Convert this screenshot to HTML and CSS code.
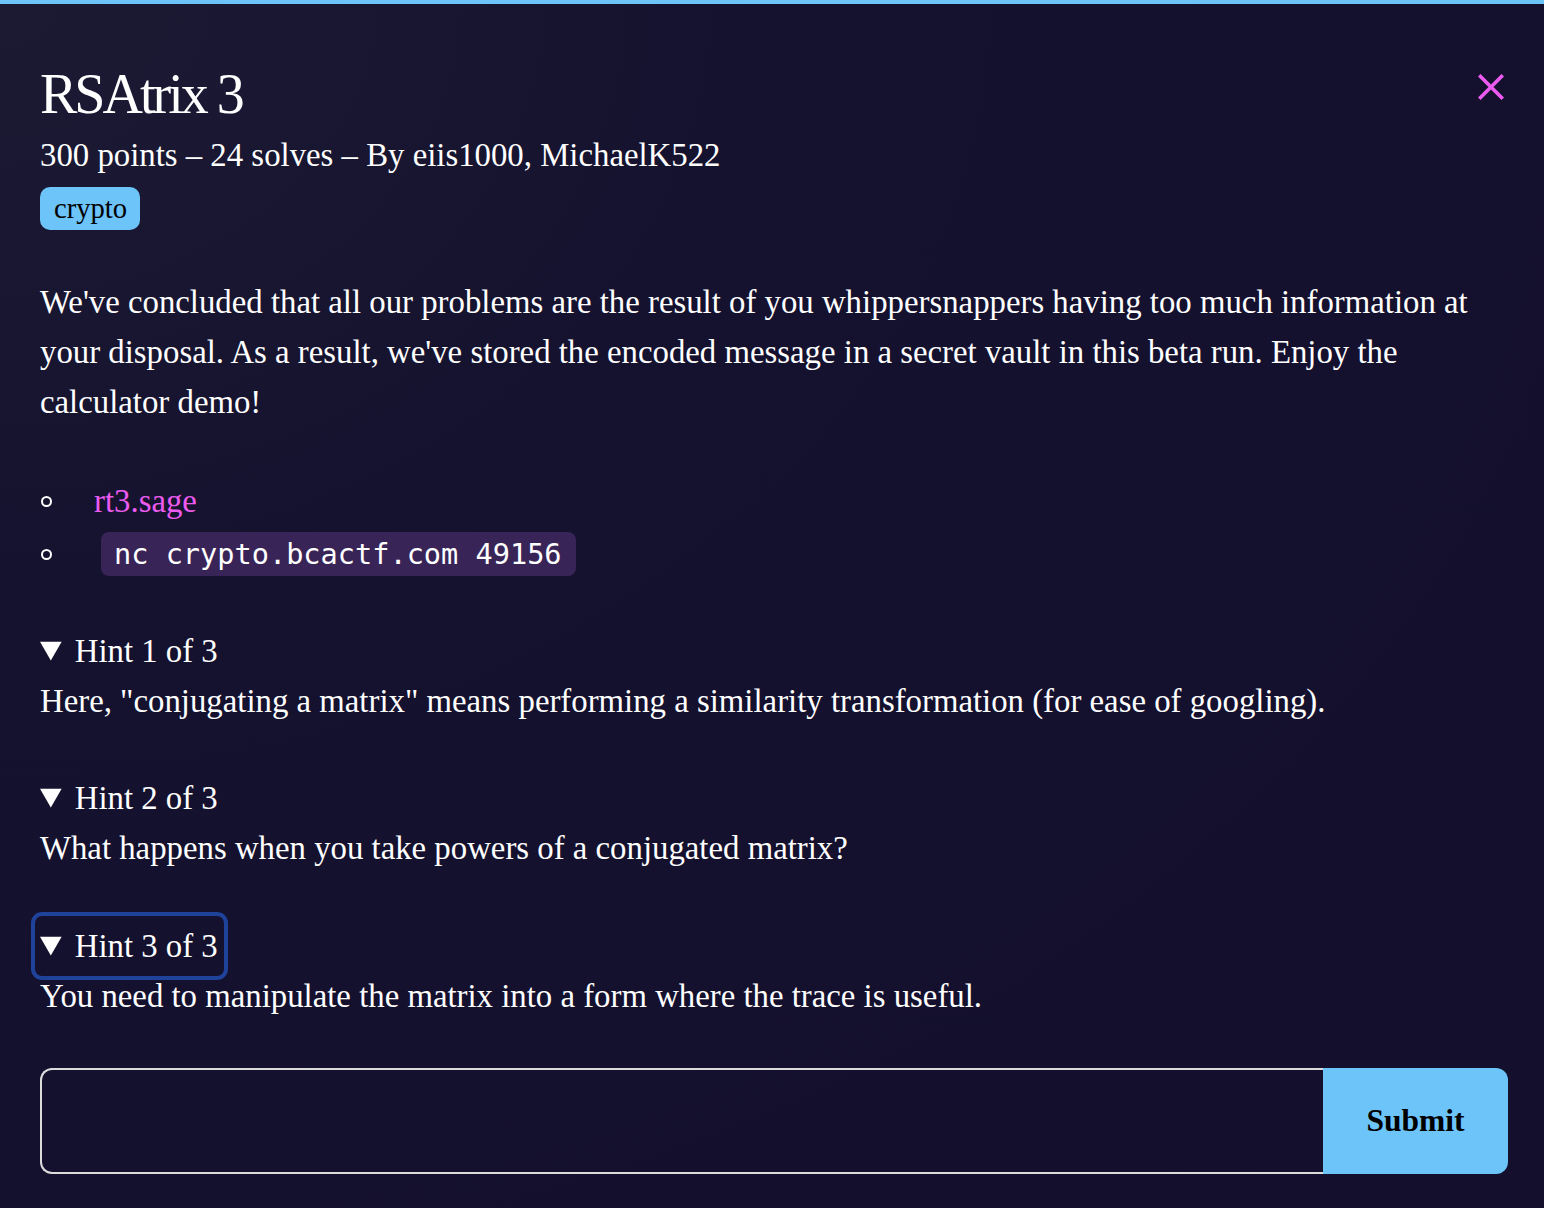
FILE: index.html
```html
<!DOCTYPE html>
<html lang="en">
<head>
<meta charset="utf-8">
<title>RSAtrix 3</title>
<link rel="stylesheet" href="styles.css">
</head>
<body>
<div class="topbar"></div>
<main class="modal">
  <header class="head">
    <div class="head-text">
      <h1 class="title">RSAtrix 3</h1>
      <div class="meta">300 points – 24 solves – By eiis1000, MichaelK522</div>
      <div class="tags"><span class="tag">crypto</span></div>
    </div>
    <button class="close" aria-label="Close">
      <svg width="26" height="26" viewBox="0 0 26 26"><path d="M2.5 2.5L23.5 23.5M23.5 2.5L2.5 23.5" stroke="#ec5bef" stroke-width="3.6" stroke-linecap="square" fill="none"/></svg>
    </button>
  </header>

  <p class="desc">We've concluded that all our problems are the result of you whippersnappers having too much information at your disposal. As a result, we've stored the encoded message in a secret vault in this beta run. Enjoy the calculator demo!</p>

  <ul class="files">
    <li><a class="link" href="#">rt3.sage</a></li>
    <li><code class="code">nc crypto.bcactf.com 49156</code></li>
  </ul>

  <details class="hint first" open>
    <summary>Hint 1 of 3</summary>
    <p>Here, "conjugating a matrix" means performing a similarity transformation (for ease of googling).</p>
  </details>
  <details class="hint" open>
    <summary>Hint 2 of 3</summary>
    <p>What happens when you take powers of a conjugated matrix?</p>
  </details>
  <details class="hint last" open>
    <summary class="focused">Hint 3 of 3</summary>
    <p>You need to manipulate the matrix into a form where the trace is useful.</p>
  </details>

  <form class="flag-form">
    <input class="flag-input" type="text">
    <button class="submit" type="button">Submit</button>
  </form>
</main>
</body>
</html>
```

FILE: styles.css
```css
html, body {
  margin: 0;
  padding: 0;
}
body {
  width: 1544px;
  height: 1208px;
  overflow: hidden;
  background: radial-gradient(ellipse at 0% 0%, #1c1a33 0%, #15122f 35%, #130f2c 100%);
  color: #ffffff;
  font-family: "Liberation Serif", "Times New Roman", serif;
  font-size: 32.8px;
}
.topbar {
  height: 4px;
  background: #6cc4f8;
}
.modal {
  padding: 62px 36px 0 40px;
}
.head {
  display: flex;
  justify-content: space-between;
  align-items: flex-start;
}
.title {
  margin: 0;
  font-size: 56px;
  font-weight: normal;
  line-height: 56px;
  letter-spacing: -3px;
}
.meta {
  margin-top: 13px;
  line-height: 40px;
}
.tags {
  margin-top: 12px;
  display: flex;
}
.tag {
  background: #6cc4f8;
  color: #000;
  font-size: 28.6px;
  line-height: 35px;
  padding: 4px 13px 4px 14px;
  border-radius: 10px;
}
.close {
  background: none;
  border: none;
  padding: 0;
  margin: 8px 4px 0 0;
  width: 26px;
  height: 26px;
  cursor: pointer;
}
.close svg { display: block; }
.desc {
  margin: 47px 0 0;
  line-height: 50px;
}
.files {
  margin: 49px 0 0;
  padding: 0;
  list-style: none;
}
.files li {
  display: flex;
  align-items: center;
  line-height: 50px;
}
.files li::before {
  content: "";
  flex: none;
  width: 7px;
  height: 7px;
  border: 2px solid #fff;
  border-radius: 50%;
  margin: 0 42px 0 1px;
}
.link {
  color: #ec5bef;
  text-decoration: none;
}
.code {
  display: inline-block;
  margin: 6px 0 6px 7px;
  font-family: "DejaVu Sans Mono", "Liberation Mono", monospace;
  font-size: 28.6px;
  line-height: 34px;
  padding: 5px 14px 5px 13px;
  border-radius: 8px;
  background: #392457;
  color: #fff;
}
.hint {
  margin-top: 47px;
}
.hint.first {
  margin-top: 44px;
}
.hint.last {
  margin-top: 48px;
}
.hint summary {
  line-height: 50px;
  width: max-content;
  cursor: pointer;
}
.hint summary.focused {
  outline: 4px solid #1f429b;
  outline-offset: 5px;
  border-radius: 2px;
  padding-right: 1px;
}
.hint p {
  margin: 0;
  line-height: 50px;
}
.flag-form {
  display: flex;
  margin-top: 47px;
  height: 106px;
}
.flag-input {
  flex: 1;
  box-sizing: border-box;
  background: transparent;
  border: 2px solid #dcdcdc;
  border-right: none;
  border-radius: 12px 0 0 12px;
  color: #fff;
  font: inherit;
  padding: 0 20px;
  outline: none;
}
.submit {
  width: 185px;
  border: none;
  background: #6cc4f8;
  color: #000;
  font-family: "Liberation Serif", "Times New Roman", serif;
  font-weight: bold;
  font-size: 31.5px;
  border-radius: 0 12px 12px 0;
  cursor: pointer;
}
```
